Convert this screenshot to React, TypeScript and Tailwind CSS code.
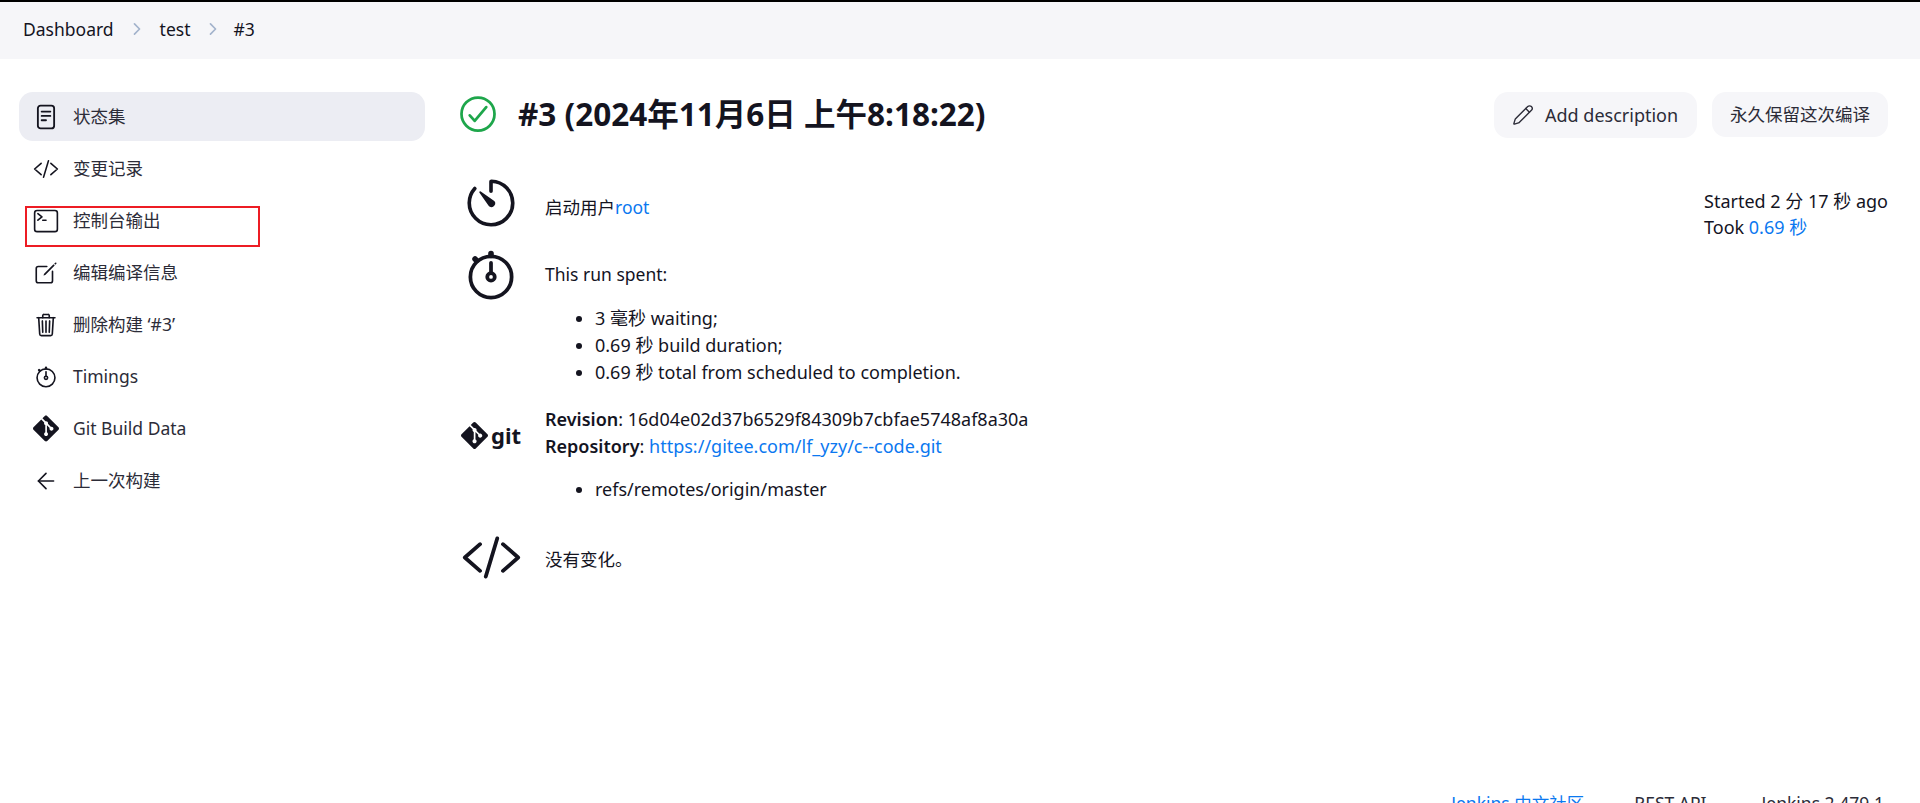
import React from "react";
import { ArrowLeft, Pencil } from "lucide-react";
import {
  IoCheckmarkCircleOutline,
  IoChevronForward,
  IoCodeSlashOutline,
  IoCreateOutline,
  IoStopwatchOutline,
  IoTerminalOutline,
  IoTimerOutline,
  IoTrashOutline,
} from "react-icons/io5";
import { SiGit } from "react-icons/si";

const StatusIcon = () => (
  <svg viewBox="0 0 24 24" className="h-[26px] w-[26px]" fill="none" stroke="currentColor" strokeWidth="1.7" strokeLinecap="round">
    <rect x="4.5" y="1.5" width="15" height="21" rx="2.5" />
    <path d="M8 7h8M8 11h8M8 15h4" />
  </svg>
);

const tasks = [
  { label: "状态集", icon: <StatusIcon />, active: true },
  { label: "变更记录", icon: <IoCodeSlashOutline size={28} /> },
  { label: "控制台输出", icon: <IoTerminalOutline size={28} /> },
  { label: "编辑编译信息", icon: <IoCreateOutline size={28} /> },
  { label: "删除构建 ‘#3’", icon: <IoTrashOutline size={28} /> },
  { label: "Timings", icon: <IoStopwatchOutline size={26} /> },
  { label: "Git Build Data", icon: <SiGit size={27} /> },
  { label: "上一次构建", icon: <ArrowLeft size={26} strokeWidth={1.5} /> },
];

const Breadcrumbs = () => (
  <div className="flex h-[59px] items-center border-t-2 border-black bg-[#f6f6f9] pl-[23px] pb-[3px]">
    <span>Dashboard</span>
    <IoChevronForward size={18} className="mx-[14px] text-[#a3b3cc]" />
    <span>test</span>
    <IoChevronForward size={18} className="mr-[12px] ml-[13px] text-[#a3b3cc]" />
    <span>#3</span>
  </div>
);

const Sidebar = () => (
  <aside className="relative w-[425px] shrink-0 pt-[33px] pl-[19px]">
    {tasks.map((task) => (
      <div
        key={task.label}
        className={`mb-[3px] flex h-[49px] items-center rounded-[14px] pl-[14px] ${task.active ? "bg-[#ecedf3]" : ""}`}
      >
        <span className="flex w-[26px] justify-center">{task.icon}</span>
        <span className="ml-[14px] text-[#2c2c38]">{task.label}</span>
      </div>
    ))}
    {/* red box drawn over the screenshot */}
    <div className="absolute top-[147px] left-[25px] h-[41px] w-[235px] border-2 border-[#ed1c24]" />
  </aside>
);

const Main = () => (
  <main className="min-w-0 flex-1 pt-[33px] pr-[32px] pl-[35px]">
    <div className="flex items-start justify-between">
      <div className="flex items-center">
        <IoCheckmarkCircleOutline size={44} className="-ml-[4px] text-[#1ea64b]" />
        <h1 className="ml-[18px] text-[31.5px] leading-[44px] font-bold">#3 (2024年11月6日 上午8:18:22)</h1>
      </div>
      <div className="flex gap-[15px]">
        <button className="flex h-[46px] w-[203px] items-center gap-[11px] rounded-[14px] bg-[#f6f6f9] pl-[18px] text-[18px] text-[#2c2c38]">
          <Pencil size={22} strokeWidth={1.5} />
          Add description
        </button>
        <button className="h-[45px] w-[176px] rounded-[14px] bg-[#f6f6f9] text-[#2c2c38]">永久保留这次编译</button>
      </div>
    </div>

    <div className="mt-[40px] flex items-start justify-between">
      <div>
        <div className="flex h-[50px] items-center">
          <IoTimerOutline size={58} className="ml-[2px]" />
          <p className="ml-[25px] pt-[8px]">
            启动用户<a className="text-[#0b78f0]">root</a>
          </p>
        </div>
        <div className="mt-[33px] flex items-start">
          <IoStopwatchOutline size={60} className="-mt-[16px] ml-[1px]" />
          <div className="ml-[24px]">
            <p>This run spent:</p>
            <ul className="mt-[17px] list-disc pl-[50px] text-[18px]">
              <li>3 毫秒 waiting;</li>
              <li>0.69 秒 build duration;</li>
              <li>0.69 秒 total from scheduled to completion.</li>
            </ul>
          </div>
        </div>
        <div className="mt-[20px] flex items-start">
          <div className="mt-[11px] ml-[1px] flex w-[84px] items-center">
            <SiGit size={27} />
            <span className="ml-[3px] text-[22px] leading-[36px] font-bold">git</span>
          </div>
          <div className="text-[18px]">
            <p>
              <b className="font-semibold">Revision</b>: 16d04e02d37b6529f84309b7cbfae5748af8a30a
            </p>
            <p>
              <b className="font-semibold">Repository</b>: <a className="text-[#0b78f0]">https://gitee.com/lf_yzy/c--code.git</a>
            </p>
            <ul className="mt-[16px] list-disc pl-[50px]">
              <li>refs/remotes/origin/master</li>
            </ul>
          </div>
        </div>
        <div className="mt-[24px] flex items-center">
          <IoCodeSlashOutline size={61} className="ml-[1px]" />
          <p className="ml-[23px] pt-[4px]">没有变化。</p>
        </div>
      </div>
      <div className="mt-[10px] w-[184px] text-[18px] leading-[26px]">
        <p>Started 2 分 17 秒 ago</p>
        <p>
          Took <a className="text-[#0b78f0]">0.69 秒</a>
        </p>
      </div>
    </div>
  </main>
);

const Footer = () => (
  <footer className="flex justify-end pr-[36px] text-[#2c2c38]">
    <a className="text-[#0b78f0]">Jenkins 中文社区</a>
    <span className="ml-[50px]">REST API</span>
    <span className="ml-[55px]">Jenkins 2.479.1</span>
  </footer>
);

export default function App() {
  return (
    <div className="h-[803px] overflow-hidden bg-white font-['Noto_Sans','Noto_Sans_CJK_SC',sans-serif] text-[17.5px] leading-[27px] text-[#14141f]">
      <Breadcrumbs />
      <div className="flex h-[731px]">
        <Sidebar />
        <Main />
      </div>
      <Footer />
    </div>
  );
}
